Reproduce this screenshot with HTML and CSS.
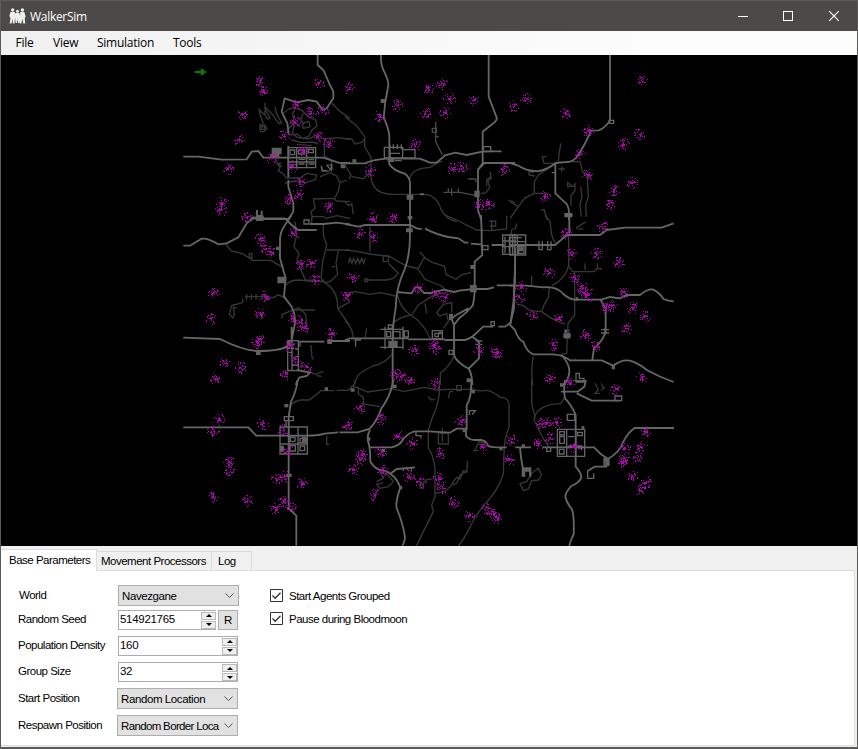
FILE: index.html
```html
<!DOCTYPE html>
<html lang="en">
<head>
<meta charset="utf-8">
<title>WalkerSim</title>
<link rel="stylesheet" href="styles.css">
</head>
<body>
<div class="window">
  <header class="titlebar">
    <svg class="app-icon" width="17" height="17" viewBox="0 0 17 17" fill="#eee">
      <circle cx="3.7" cy="2" r="1.7"/><circle cx="8.5" cy="3.3" r="1.5"/><circle cx="13.4" cy="2" r="1.7"/>
      <path d="M1.500 4h4.200l1.300 4-1 2-.5 5.500H3.800L3.500 11l-1 4.500H.6L1.500 10 .3 8zM6.500 5h4l.8 4-.8 6H9L8.500 11l-.6 4H6.600L6 9zM11.300 4h4l1.400 4.500-.9 1.500.4 5.500h-1.900L13.400 11l-1 4.500h-1.700l.3-5.500z"/>
    </svg>
    <span class="title">WalkerSim</span>
    <svg class="caption-buttons" width="110" height="14" viewBox="0 0 110 14" fill="none" stroke="#fff">
      <path d="M0 7.500h10M45.500 2.500h9v9h-9z" shape-rendering="crispEdges"/><path d="M91.200 2.200l9.600 9.600m0-9.600l-9.600 9.600" stroke-width="1.200"/>
    </svg>
  </header>
  <nav class="menubar"><span class="m-file">File</span><span class="m-view">View</span><span class="m-sim">Simulation</span><span class="m-tools">Tools</span></nav>
  <main class="viewport">
    <svg class="map" width="856" height="491" viewBox="1 55 856 491">
      <!-- north-west -->
      <g transform="translate(180 50) scale(.33333)">
        <g class="trail">
          <path d="M255 158v20l15 25-6 5-10-15 3-20 20 20 20 28 8-2-15-28-5-20M255 195l-18-16 5 20 8 22M240 225h15l5 12-8 8h-10l-3-8zM244 230h10v8h-9z"/>
          <path d="M310 190l15-12 20-6 22 10 20 20 20 8 4 18-15 12-10 20-20 5-15-14-20 5-10-15 15-15 8-30M348 170l-10 20 5 35-6 25 15 12 35 5 20-12M370 235l20-5-3-15-20 5zM335 270l30 8 30-2 20 5M350 283l45 4M370 190l-8 18 10 15"/>
          <path d="M290 340l10 12-5 10 15 10 10 12h40l20-14 30 5-5 15-30 8-30-5-30 6M430 267l40-4 40 4M433 268v50l20 12 5 25-15 10-18-2v-15M440 345h18M420 380l30-12 20 10 10 20 20-8M480 398l-5 25-12 25M400 445l5 30-12 10 5 20M400 447l60-2 10 8 40 2M290 335l15 15m-13-5l12-8"/>
          <path d="M456 160l25 25 29 20"/>
        </g>
        <g class="road">
          <path d="M413 15v30l17 15 20 45 10 20v20l-20 30-12 5-18-25-25-5-35 7-36-12-9 40 17 35 4 30"/>
          <path d="M10 320h45l70 9 75-1 15-23 20-2 15 20h180l50 16h30M325 288v94M325 390v20l15 50v25l-15 22h-80l-25-5-10 8"/>
        </g>
        <path class="town" d="M325 293h82v60h-82zM350 293v60M380 293v60M325 336h82M330 300h14v14h-14zM356 300h18v12h-18zM386 298h14v10h-14zM356 342h18M386 342h18M330 345h14M356 328h20M386 329h16M423 348l5 14h14M440 345l14 16v-18"/>
        <path class="block" d="M275 293h30v20h-30zM270 312h28v12h-28zM228 480h6v14h8v-12h6v16h3v12h-24zM482 343h14v12h-14z"/>
      </g>
      <!-- north -->
      <g transform="translate(345 50) scale(.33333)">
        <g class="trail">
          <path d="M0 200l35 27 24 33v30l19 32v60q5 50 65 51h80q50-5 65 45 15 30 48 37M0 267h20l10 15 20-5 10-12M195 385q5-30 60-33l30-18M0 345l18 30-5 12M20 380l35 6 20-20M0 455l10 12 10-5 5 30"/>
          <path d="M435 365l4 20-10 8 5 20-12 15-15 3M437 380l-12 10v18M490 450l20 8M280 335h12"/>
        </g>
        <g class="road">
          <path d="M108 15q-2 30 12 55 10 20 10 35-5 30-9 50l-5 48q16 35 17 55v85q15 20 45 27 17 12 17 30v110M0 340h60q20-10 65-14h100l30 12h20l25-22 30-8 35 7 50-11h55M431 15v125l25 65-5 10-38 30v95l-14 20v120l10 30M398 360l20-21h92"/>
        </g>
        <g class="street"><path d="M272 215v60l20 40M262 235h12v12h-12zM272 260h10M295 427h50l50 10M310 415v12m10-12v22m20-22v14M370 387h22v10"/></g>
        <path class="town" d="M118 292h55v32h-55zM173 299h37v25h-37zM135 285v50m10-52v15m12-15v15m12-15v15M150 332h20M135 310h30M415 290h22v15h-22z"/>
        <path class="block" d="M107 147h13v12h-13zM22 328h12v10H22zM185 435h20v14h-20zM388 422h16v20h-16zM188 498h14v10h-14zM128 322h20v14h-20zM225 430h12v6h-12z"/>
      </g>
      <!-- north-east -->
      <g transform="translate(510 50) scale(.33333)">
        <g class="trail"><path d="M145 335l3-30 5-25M137 340l-35 0-5-20h12M130 345l-45 30-12 20v35l-30 15-43 60M75 378l-18-3v-12l15 5M73 430h40M0 455l25 15M93 480h10l8 30M180 335h30l8 30 14 15 3 60-8 25 2 35M212 410l4 30 -6 25 4 35M175 400l14 10 6-8v20l-12 15v30M155 350v15m-10-8h20M173 395v15h12"/></g>
        <g class="road"><path d="M300 15v198q-20 25-35 28l-22 1q-12 30-33 65-12 22-30 28l-43 4q-25 20-50 24-35 2-60-15-15-6-27-9M136 340v90l35 33q6 12 6 25v22"/></g>
        <path class="town" d="M297 211h14v9h-14zM165 491h20v9h-20zM125 368h10"/>
      </g>
      <!-- west -->
      <g transform="translate(180 215) scale(.33333)">
        <g class="trail">
          <path d="M138 88l15 20 35 8 30 20h55l20 12 18 10M208 115h8v14h-8zM345 20l5 40-8 35 15 20-6 20 10 25 15 35 35 1M430 30v30l10 30-12 50-5 50 15 15M318 210q10-15 40-15l42 5h30q45 25 43 80l37 53M440 105h70M475 108l-7 35 5 35-20 20-15 5M455 155h10M395 5h35l10 5 30-8 40 8M340 285h65M305 310l2-12 50-20 20 20 5 55M475 280l35-20"/>
          <path d="M195 245h60l25 3 15-8 22 8M188 250v12l-15 5-18 5-7 25 10 12 5-10-3-22 10 2M200 238v16m14-17v17m14-17v17m18-17v17M393 390l3 38 5 5M390 470l15 8 25-8M410 482l15 2M395 5v20"/>
        </g>
        <g class="road"><path d="M10 92h20l35-21q20-2 50 17l25-3 35-18 25-42 20-15h95l20 20 20 15h55M335 0l-20 30q-15 20-15 45v55l17 60-5 55 23 30q15 30 8 60l-8 40M10 368l110 4q70 35 113 36 65 0 90-14M335 335v45M358 380h75M442 378h68M390 27h40l40-4 40 5M350 465l40 8-10 10-22 5q-10 15-10 22"/></g>
        <path class="town" d="M323 377h32v90h-32zM336 377v90M323 400h20M345 402h10M345 425h10M338 450h16M326 412h8M372 15h15v12h-15zM360 380v15"/>
        <path class="block" d="M228 0h22v18h-22zM292 185h26v20h-26zM228 408h14v12h-14zM288 95h10v10h-10zM442 372h14v15h-14zM320 378h12v14h-12z"/>
      </g>
      <!-- centre -->
      <g transform="translate(345 215) scale(.33333)">
        <g class="trail">
          <path d="M0 105l35 4 40 8 60 8 30 18 22 10 32 8 20-35-15-15M75 35v75M238 128l25 15 35 10 5 25 30 15 20-15 25-5M220 163l20 30 50 20 20 20M0 235l30-5 45 8 30-5 48 10M10 145l5-15 6 15 5-15 6 15 6-15 6 15 6-15 6 15 5-15M65 195h60l20-5 15-15-30-30M115 122h15v18h-15zM60 192h8v8h-8zM157 240q10 40 40 60 40 25 58 70M200 300q-35 5-57 25M200 300l20-30 40-25 15-10M240 265l5 30M285 305l-10-12 20-25 25-5v30M300 0l35 15 60 30 40 2 50-5v-40M0 318q25 20 25 55M65 340l-5 28M143 415q-20 30-60 38-40 20-45 30l-12 27M326 425q-10 25-40 50v35M440 20v28m-8-30h20v15h-18M295 340l15-20-5-25-20 8"/>
        </g>
        <g class="road"><path d="M0 27l40 8 20-5h135l20 10 15 2M240 41q40 20 70 25l30 4 20 13h10M378 86l35 3M440 90h38M195 0v60q0 60-15 100-28 60-28 120-9 50-9 90v140M408 0l2 50v40l2 30-23 20v80q0 20-5 50-15 20-42 40l-15 20v90q5 20 45 42 10 20 10 48M0 375l15-5h175M190 373h110M300 375h60q20-5 35-22l20-18h30M460 335h20l17-12 8-60 5-60v-60M155 231l45 4 10-18h12l15 17h20l40-10 30 7 20-5 40-4h40l20-5M455 211h55M370 462l32-32v-50l-20-15M370 280l-40 22-10 10 8 20"/></g>
        <path class="town" d="M473 60h37v58h-37zM473 78h37M473 95h37M480 65v50m13-50v50M120 335v68m54-68v68M106 343h66m-66 54h70M125 350v15h12v-15zM145 350h20v20h-20zM178 348h12v18h-12zM262 347h30v24h-30zM270 355h10v10h-10zM28 375h20M32 375v20M413 92h16v12h-16zM130 330h12v10h-12zM312 406h12v12h-12zM438 320h10v12h-10zM392 378h20m-20 10h20"/>
        <path class="block" d="M375 210h20v22h-20zM376 150h12v12h-12zM130 377h28v20h-28zM312 296h12v20h-12zM183 40h20v12h-20zM365 490h16v12h-16zM280 350h10v8h-10z"/>
      </g>
      <!-- east -->
      <g transform="translate(510 215) scale(.33333)">
        <g class="trail"><path d="M105 0l15 20 5 40 10 25M176 62v90q-10 40-50 60M176 155l12 15h65l8-10 15 2M194 170v130l-20 25-4 90-20 5M118 218l-3 30-12 20-8 22-35-3-20-15-20-5M95 290l30 20 40 18M65 183v30M20 25l-3 15-12 4-2 20M225 145v20M262 145v15M70 425q-8 40-2 85M198 40l20-14 10-5M205 43l15-2M165 345h12v25h-12zM195 430v8"/></g>
        <g class="road"><path d="M0 90h135l20-17q10-12 25-13h90l20-15 55-7h110l36-13M0 212h50l50 5q40-4 60 20 20 17 35 17h80l25-8 30 4 20-10h40q25-20 40-16 20 10 30 28 15 6 31 7M178 0v62M15 100v60l-3 60v60L0 330l15 15q10 30 25 35 10 30 30 38h60q30 2 50 18h95l35 16q25-20 50-15 30 10 50 28 40 22 81 36M272 255l15 25v70q-10 30-35 50l-5 35M155 420q25 30 23 50 0 15-15 40M165 0h22"/></g>
        <path class="town" d="M0 60h47v60H0zM0 80h47M8 60v60m14-60v60M26 95v20h16v-20zM0 68h35M87 78v25m10-24v25h-12M113 78v25m10-24v25h-12M273 344h24m-24 10h24M285 338v22M198 475v25h24v-10h-14v-15z"/>
        <path class="block" d="M197 247h8v10h-8zM22 97h18v12H22zM305 453h10v10h-10zM163 345h8v8h-8zM160 355h22v14h-22z"/>
      </g>
      <!-- south -->
      <g transform="translate(180 380) scale(.33333)">
        <g class="trail">
          <path d="M328 80q15-18 35-20h25l35-28h40M470 31h35l20-20V0M513 18l20 5 30 13 70-10 40 8 60-12 40 8 30-2h70M535 22v20l15 10v20l50 8M440 168v25h8M778 0v40q-5 40-20 70l-13 40v55q18 25 20 65v80l-10 25 5 20-30 60L710 497M870 20q15 15 40 12 20-5 50 20 30 0 27 30v60q-15 35-15 80l-2 60q-15 50-60 95-30 40-45 75-15 30-45 65M1055 0v70l10 40-3 15M1063 125q-3-50 80-55l12-20M1062 120l30 60 15 20M1075 195l10-15M745 50l10 10 10-2M765 340l30-5 20-20 15-5 10-25 20-10 3-33M740 310l-5-10 20-3M720 312h10v12h-10zM590 305l20-10-10-18 25 8 15 20-15 15-25 5-10-12 20-5M1020 310l20-5 15-25 20-15 10 20-10 15-20 2-10 25-15 5zM1245 10l10 20-10 10h15M1263 10l10 15-10 5M885 210l12-25 20 5M880 212h15M830 17h14v15h-14zM775 160h30v32h-30zM787 145v40M805 55l5-20h10M815 312l15-20 10 5 10-25 14 4"/>
        </g>
        <g class="road"><path d="M353 0q-4 35-20 65l-7 45v275l23 22v90M10 142h195l24 25h155q30 0 50-6l40-4M478 157h55l35-10q25-25 35-60 30-40 37-87M570 150q-12 20-4 40 5 20 5 55 15 25 40 27 35 10 50 50-17 50-10 65 20 50 24 85-1 15-8 25M570 202h65q25-5 35-25 20-22 35-23h40l65 4 20-12h28v22q10 12 25 12h20q20 5 20 17 10 5 25 5h32M860 150V75q15-20 14-75M1006 202h47M1020 200q3 40 8 60v30M630 282l20-15 55-5M1087 202h155l20 20q15 10 22 15 35-20 45-50 15-30 35-43h118M1155 0q-5 30 0 55 20 20 32 50v155q18 20 17 33-6 15-30 25-18 20-18 30 3 20 20 40 7 20 5 75-15 30-12 37M1190 40l45 22h85M1218 0l-5 20-20 15h-50M1279 240v20h-35l-20 12"/></g>
        <path class="town" d="M300 141h82v81h-82zM326 141v81M354 141v81M300 192h82M300 167h82M330 197h16v16h-16zM360 175h18v12h-18zM360 198h14v14h-14zM331 172h14v12h-14zM1132 148h82v81h-82zM1160 148v81M1187 148v81M1132 202h82M1139 155h14v10h-14zM1139 170h14v20h-14zM1165 170h18M1193 157h14v10h-14zM1138 208h14v14h-14zM1165 198h40v12M313 110h27v12h-27zM318 122v20M868 105V92h18l-10 12M1162 103h22v18h-22zM708 155v12h15v8M1223 270v25h18v-15M670 265v8m12-10v7m12-8v10M1305 48h20v14h-20zM1100 202v12h12v-10"/>
        <path class="block" d="M300 197h12v18h-12zM366 170h14v20h-14zM1270 233h19v25h-8v-12h-5v12h-6zM1028 262h26v28h-7v-15h-11v15h-8zM434 22h10v10h-10zM313 72h12v10h-12zM320 281h15v10h-15zM563 172h8v10h-8zM657 318h10v10h-10zM605 207h10v9h-10zM1025 193h10v8h-10zM958 203h10v8h-10zM875 30h10v10h-10zM1140 10h12v10h-12zM848 145h12v12h-12zM1187 0h30v8h-30zM512 25h12v10h-12zM1205 138h8v10h-8zM638 14h12v10h-12z"/>
      </g>
      <path id="agents" class="agents"/>
      <path d="M194.500 71h6.500v-3l5.500 4-5.500 4v-3h-6.500z"/>
    </svg>
  </main>
  <div class="tabs"><span class="tab active">Base Parameters</span><span class="tab t-move">Movement Processors</span><span class="tab t-log">Log</span></div>
  <section class="page">
    <div class="fields">
      <div class="row r1"><label>World</label><div class="combo shift">Navezgane<svg width="9" height="6" viewBox="0 0 9 6"><path d="M.5.500l4 4 4-4"/></svg></div></div>
      <div class="row r2"><label>Random Seed</label><div class="num seed"><span>514921765</span><div class="spin"><i></i><i class="down"></i></div></div><div class="button">R</div></div>
      <div class="row r3"><label>Population Density</label><div class="num"><span>160</span><div class="spin"><i></i><i class="down"></i></div></div></div>
      <div class="row r4"><label>Group Size</label><div class="num"><span>32</span><div class="spin"><i></i><i class="down"></i></div></div></div>
      <div class="row r5"><label>Start Position</label><div class="combo"><span>Random Location</span><svg width="9" height="6" viewBox="0 0 9 6"><path d="M.5.500l4 4 4-4"/></svg></div></div>
      <div class="row r6"><label>Respawn Position</label><div class="combo"><span class="tight">Random Border Loca</span><svg width="9" height="6" viewBox="0 0 9 6"><path d="M.5.500l4 4 4-4"/></svg></div></div>
    </div>
    <div class="checks">
      <div class="check"><svg width="13" height="13" viewBox="0 0 13 13"><path class="box" d="M.5.500h12v12H.5z"/><path class="tick" d="M2.500 6.500l2.700 2.800 5.300-5.600"/></svg>Start Agents Grouped</div>
      <div class="check"><svg width="13" height="13" viewBox="0 0 13 13"><path class="box" d="M.5.500h12v12H.5z"/><path class="tick" d="M2.500 6.500l2.700 2.800 5.300-5.600"/></svg>Pause during Bloodmoon</div>
    </div>
  </section>
</div>
<script src="agents.js"></script>
</body>
</html>
```
FILE: agents.js
```js
// Agent groups: sector origin, then group centres in thirds of a pixel.
const sectors = [
  [180, 50, [[240,95],[252,124],[187,195],[178,271],[143,357],[128,460],[122,482],[202,502],[418,99],[508,115],[349,165],[394,188],[430,180],[347,216],[312,259],[414,260],[448,281],[368,303],[275,324],[337,350],[360,396],[355,436],[331,451],[449,470]]],
  [345, 50, [[155,166],[106,198],[249,117],[292,100],[314,148],[387,151],[241,190],[300,187],[211,286],[76,364],[324,355],[350,349],[476,360],[403,465],[432,463],[83,505],[144,503]]],
  [510, 50, [[12,169],[49,146],[167,191],[399,94],[235,243],[389,253],[342,283],[209,310],[236,374],[367,398],[314,422],[300,460],[105,440]]],
  [180, 215, [[242,72],[257,99],[275,112],[343,55],[364,149],[395,144],[406,196],[101,234],[255,246],[93,311],[240,297],[341,311],[366,325],[370,340],[500,242],[453,356],[239,372],[231,385],[327,391],[346,433],[379,455],[318,475],[134,443],[184,459],[104,493]]],
  [345, 215, [[44,55],[86,64],[25,186],[223,220],[272,236],[302,245],[206,406],[267,390],[276,400],[401,403],[453,412],[458,414],[152,478],[168,487],[193,498],[270,507]]],
  [510, 215, [[278,35],[169,54],[182,117],[260,116],[328,141],[118,173],[193,188],[33,216],[27,248],[214,215],[222,235],[238,239],[343,233],[287,277],[307,273],[369,279],[406,304],[68,300],[147,309],[351,342],[227,362],[132,391],[258,394],[120,491],[397,484],[180,503]]],
  [180, 380, [[118,118],[100,153],[249,132],[313,151],[541,82],[504,136],[603,118],[841,122],[1308,27],[145,246],[147,270],[290,297],[318,290],[367,310],[99,352],[203,363],[287,386],[312,366],[333,380],[323,212],[655,168],[696,190],[604,217],[548,222],[542,238],[519,270],[609,273],[584,345],[687,290],[722,307],[781,220],[777,296],[788,323],[821,367],[867,410],[921,386],[941,400],[952,415],[994,179],[911,202],[989,240],[1076,191],[1102,129],[1130,129],[1085,133],[1113,175],[1186,201],[1399,158],[1336,204],[1385,203],[1333,235],[1330,250],[1369,232],[1360,291],[1398,309],[1384,332]]]
];

let state = 32;
function random() {
  state = (state * 1664525 + 1013904223) % 4294967296;
  return state / 4294967296;
}

let dots = "";
for (const [ox, oy, groups] of sectors) {
  for (const [gx, gy] of groups) {
    for (let i = 0; i < 32; i++) {
      const angle = random() * Math.PI * 2;
      const reach = 6 * random();
      const x = Math.floor(ox + gx / 3 + Math.cos(angle) * reach);
      const y = Math.floor(oy + gy / 3 + Math.sin(angle) * reach);
      dots += `M${x} ${y}h1v1h-1z`;
    }
  }
}
document.getElementById("agents").setAttribute("d", dots);
```
FILE: styles.css
```css
* { box-sizing: border-box; }
body { margin: 0; background: #fff; color: #000; font: 11.5px "Liberation Sans", sans-serif; letter-spacing: -0.5px; overflow: hidden; white-space: nowrap; }
.window { width: 858px; height: 749px; border: 1px solid #5c5b59; border-bottom-width: 2px; display: flex; flex-direction: column; background: #f0f0f0; }
.titlebar { height: 30px; flex: none; background: #4b4a48; color: #fff; display: flex; align-items: center; padding: 0 17px 0 8px; font: 12px "Open Sans", sans-serif; }
.title { margin-left: 4px; letter-spacing: -0.3px; }
.caption-buttons { margin-left: auto; margin-right: -8px; }
.menubar { height: 24px; flex: none; display: flex; align-items: center; padding: 0 0 2px 14.5px; background: linear-gradient(90deg, #f0f0f0, #fcfcfc 75%); font: 12px "Open Sans", sans-serif; letter-spacing: -0.25px; }
.m-file { width: 37.5px; }
.m-view { width: 44px; }
.m-sim { width: 76px; }
.viewport { height: 491px; flex: none; background: #000; }
.map { display: block; }
.map path { fill: none; }
.map .road { stroke: #666; stroke-width: 5.5; }
.map .street { stroke: #4a4a4a; stroke-width: 4; }
.map .trail { stroke: #373737; stroke-width: 4; }
.map path.town { stroke: #646464; stroke-width: 4; }
.map path.block { fill: #606060; }
.map path.agents { fill: #b800b8; shape-rendering: crispEdges; }
.map > path:last-child { fill: #008000; }
.tabs { height: 24px; flex: none; display: flex; align-items: flex-end; }
.tab { height: 19px; border: 1px solid #dcdcdc; border-left: 0; border-bottom: 0; padding: 3px 0 0 4px; }
.tab.active { width: 96px; margin-bottom: -1px; padding: 4px 0 0 8px; height: 22px; background: #fff; z-index: 1; }
.t-move { width: 115px; }
.t-log { width: 40px; padding-left: 6px; }
.page { flex: 1; border: 1px solid #dcdcdc; border-left: 0; margin-right: 2px; margin-bottom: 1px; background: #fff; display: flex; padding-top: 13px; }
.fields { width: 269px; }
.row { display: flex; align-items: center; padding-left: 17px; }
.row label { width: 99px; padding-bottom: 1px; }
.r1 { height: 23px; }
.r1 label { padding-left: 1px; }
.r2 { height: 25px; }
.r3, .r5, .r6 { height: 27px; }
.r4 { height: 26px; }
.r4 label { padding-bottom: 2px; }
.combo { width: 121px; height: 21px; border: 1px solid #adadad; background: #e1e1e1; display: flex; align-items: center; justify-content: space-between; padding: 1px 4px 0 3px; letter-spacing: -0.4px; }
.combo.shift { margin-left: 1px; }
.combo span { width: 98px; }
.combo .tight { letter-spacing: -0.65px; }
.combo svg { fill: none; stroke: #555; flex: none; }
.num { width: 120px; height: 20px; margin-left: 1px; border: 1px solid #abadb3; background: #fff; display: flex; justify-content: space-between; padding-left: 1px; line-height: 16px; letter-spacing: -0.3px; }
.seed { width: 98px; border-right: 0; }
.spin { width: 15px; display: flex; flex-direction: column; gap: 1px; padding-top: 1px; }
.spin i { height: 8px; background: #eee; border: 1px solid #bbb; display: flex; align-items: center; justify-content: center; }
.spin i::before { content: ""; border: 3px solid transparent; border-top: 0; border-bottom: 3px solid #000; }
.spin .down::before { border: 3px solid transparent; border-bottom: 0; border-top: 3px solid #000; }
.button { width: 20px; height: 20px; margin-left: 2px; border: 1px solid #adadad; background: #e1e1e1; text-align: center; line-height: 19px; }
.check { height: 23px; display: flex; align-items: center; gap: 6px; letter-spacing: -0.5px; }
.check svg { fill: none; }
.box { stroke: #333; }
.tick { stroke: #333; stroke-width: 1.300; }
```
